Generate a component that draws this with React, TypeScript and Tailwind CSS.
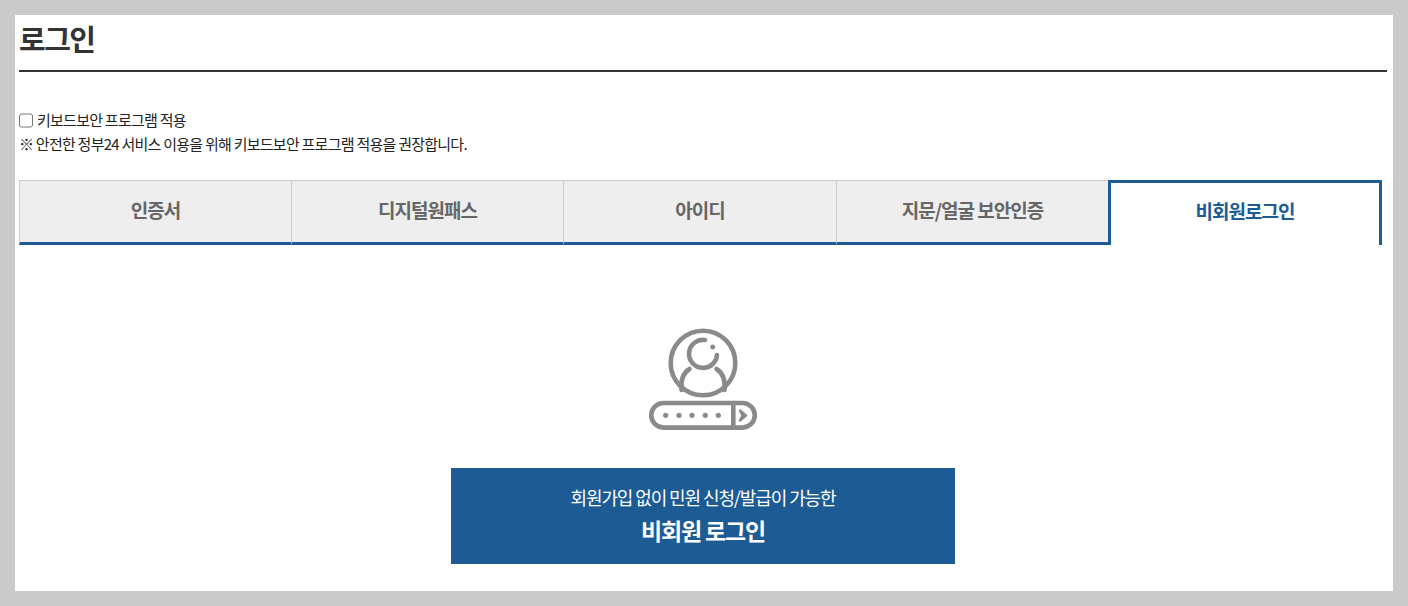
const font = '"Noto Sans CJK KR", "Noto Sans", sans-serif';

function Icon() {
  return (
    <svg width="110" height="103" viewBox="0 0 110 103" fill="none" stroke="#8a8a8a" strokeWidth="4.6" strokeLinecap="round" strokeLinejoin="round">
      <circle cx="55" cy="35" r="32.3" />
      <path d="M69 27 A14 14 0 1 1 57 12" />
      <circle cx="64.7" cy="19" r="2.5" fill="#8a8a8a" stroke="none" />
      <path d="M41.5 41 C35 45 32.500 52 33.500 62" />
      <path d="M68.5 41 C75 45 77.500 52 76.500 62" />
      <rect x="3.2" y="75" width="103.6" height="24.6" rx="12.3" />
      <path d="M85.3 75 V99.500" />
      <path d="M92 82.500 L98 87.500 L92 92.500 L94.500 87.500 Z" fill="#8a8a8a" strokeWidth="2.4" />
      <g fill="#8a8a8a" stroke="none">
        <circle cx="17.7" cy="87.300" r="2.6" />
        <circle cx="31" cy="87.300" r="2.6" />
        <circle cx="44" cy="87.300" r="2.6" />
        <circle cx="57.300" cy="87.300" r="2.6" />
        <circle cx="70.300" cy="87.300" r="2.6" />
      </g>
    </svg>
  );
}

function Tab({ label, wide }: { label: string; wide?: boolean }) {
  return (
    <div className={wide
      ? "flex h-[65px] w-[273px] items-center justify-center border-t border-l border-b-[3px] border-t-[#cccccc] border-l-[#cccccc] border-b-[#1c5b94] bg-[#eeeeee] pb-[2px] text-[19px] font-bold tracking-[-1px] text-[#666666]"
      : "flex h-[65px] w-[272px] items-center justify-center border-t border-l border-b-[3px] border-t-[#cccccc] border-l-[#cccccc] border-b-[#1c5b94] bg-[#eeeeee] pb-[2px] text-[19px] font-bold tracking-[-1px] text-[#666666]"}>
      {label}
    </div>
  );
}

export default function App() {
  return (
    <div className="h-[606px] w-[1408px] overflow-hidden bg-[#cacaca] p-[15px]" style={{ fontFamily: font }}>
      <div className="h-[576px] bg-white pl-1 pr-[6px]">
        <h1 className="h-[57px] border-b-2 border-[#333333] pt-[3px] text-[29px] leading-[40px] font-bold tracking-[-1.5px] text-[#333333]">로그인</h1>
        <div className="pt-[36px] text-[15px] leading-[24px] tracking-[-0.75px] text-[#222222]">
          <label className="flex h-[24px] items-center">
            <input type="checkbox" className="m-0 mr-[4px] h-[15px] w-[14px]" />
            키보드보안 프로그램 적용
          </label>
          <p className="h-[24px]">※ 안전한 정부24 서비스 이용을 위해 키보드보안 프로그램 적용을 권장합니다.</p>
        </div>
        <div className="mt-[24px] flex h-[65px] w-[1363px]">
          <Tab label="인증서" />
          <Tab label="디지털원패스" />
          <Tab label="아이디" wide />
          <Tab label="지문/얼굴 보안인증" />
          <div className="flex h-[65px] w-[274px] shrink-0 items-center justify-center border-x-[3px] border-t-[3px] border-[#1c5b94] bg-white pb-[5px] text-[19px] font-bold tracking-[-1px] text-[#1c5b94]">
            비회원로그인
          </div>
        </div>
        <div className="flex flex-col items-center pt-[83px]">
          <Icon />
          <button className="mt-[37px] flex h-[96px] w-[504px] flex-col items-center justify-center bg-[#1d5b94] pb-[2px] text-white">
            <span className="text-[18px] leading-[26px] tracking-[-1.1px]">회원가입 없이 민원 신청/발급이 가능한</span>
            <span className="mt-[4px] text-[23px] leading-[32px] font-bold tracking-[-1.2px]">비회원 로그인</span>
          </button>
        </div>
      </div>
    </div>
  );
}
